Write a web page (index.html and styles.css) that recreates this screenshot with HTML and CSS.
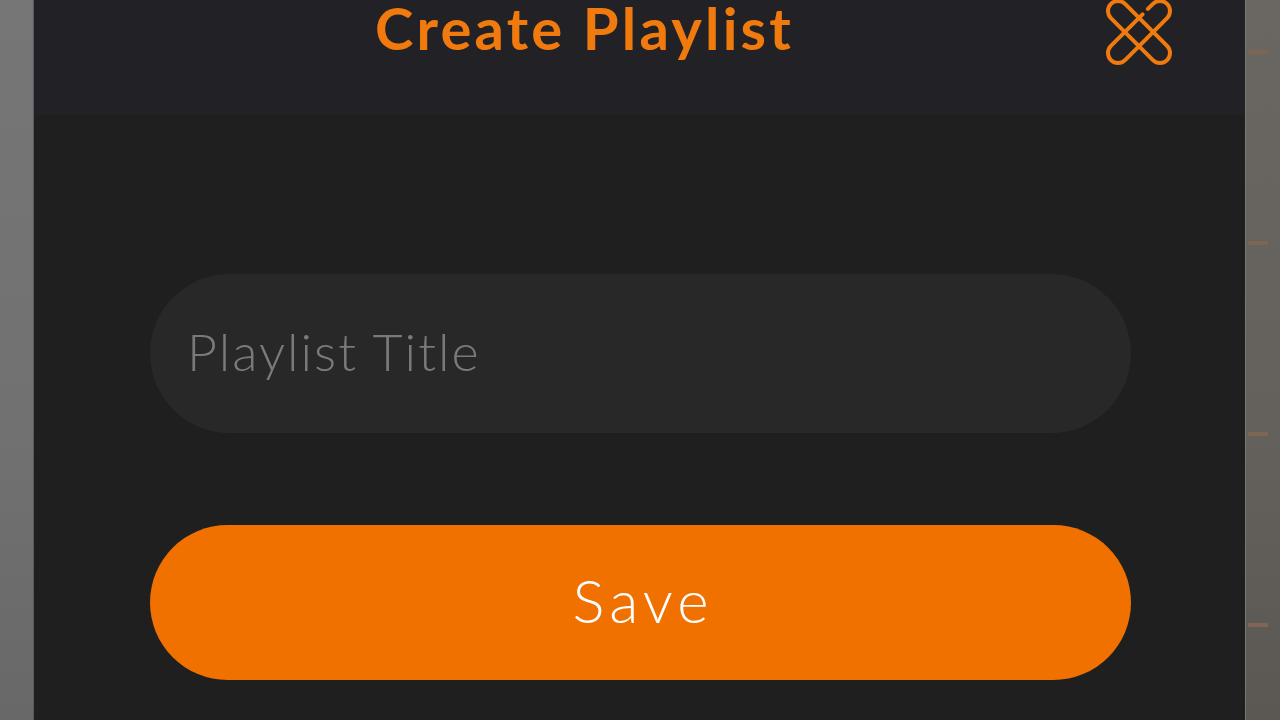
FILE: index.html
```html
<!DOCTYPE html>
<html lang="en">

<head>
  <meta charset="UTF-8" />
  <meta name="viewport" content="width=device-width, initial-scale=1.0" />
  <title>Create Playlist</title>
  <link rel="stylesheet" href="styles.css">
</head>

<body>
  <div class="screen">
    <div class="side side-left"></div>

    <div class="modal">
      <div class="modal-header">
        <h2 class="modal-title">Create Playlist</h2>
        <button class="close-btn" aria-label="Close">
          <svg viewBox="0 0 70 70" width="70" height="70" fill="none" stroke="#f07a0e" stroke-width="4" stroke-linecap="round">
            <!-- capsule from top-left to bottom-right -->
            <rect x="-4.7" y="25" width="79.4" height="20" rx="10" transform="rotate(45 35 35)" />
            <!-- capsule from bottom-left to top-right, left open near its top end -->
            <path d="M57.6 25 H64.7 A10 10 0 0 1 64.7 45 H5.3 A10 10 0 0 1 5.3 25 H50" transform="rotate(-45 35 35)" />
          </svg>
        </button>
      </div>

      <div class="modal-body">
        <input type="text" class="title-input" placeholder="Playlist Title" />
        <button class="save-btn">Save</button>
      </div>
    </div>

    <div class="side side-right">
      <span class="peek"></span>
      <span class="peek"></span>
      <span class="peek"></span>
      <span class="peek"></span>
    </div>
  </div>
</body>

</html>
```

FILE: styles.css
```css
body {
  margin: 0;
  font-family: Lato, "Noto Sans", sans-serif;
  background-color: #1f1f1f;
  overflow: hidden;
}

.screen {
  display: flex;
  height: 720px;
}

.side {
  width: 34px;
  flex-shrink: 0;
}

.side-left {
  background: linear-gradient(#767676, #717171 60%, #686868);
  border-right: 1px solid #5a5a5a;
  box-sizing: border-box;
}

.side-right {
  width: 35px;
  background: linear-gradient(#6a6763, #64615d 60%, #5b5854);
  border-left: 1px solid #7a7874;
  box-sizing: border-box;
  display: flex;
  flex-direction: column;
  gap: 187px;
  padding: 50px 0 0 2px;
}

.peek {
  display: block;
  width: 20px;
  height: 4px;
  background-color: #7f6553;
}

.modal {
  flex: 1;
  display: flex;
  flex-direction: column;
  background-color: #1f1f1f;
}

.modal-header {
  height: 115px;
  background-color: #222226;
  display: flex;
  align-items: flex-start;
  padding: 0 71px;
}

.modal-title {
  flex: 1;
  margin: 0;
  text-align: center;
  font-size: 58px;
  line-height: 56px;
  font-weight: 700;
  letter-spacing: 3.2px;
  color: #f07a0e;
}

.close-btn {
  margin: -3px 0 0 40px;
  padding: 0;
  width: 70px;
  height: 70px;
  border: none;
  background: none;
  cursor: pointer;
}

.close-btn svg {
  display: block;
}

.modal-body {
  display: flex;
  flex-direction: column;
  gap: 92px;
  padding: 159px 114px 0 116px;
}

.title-input {
  height: 159px;
  box-sizing: border-box;
  padding: 0 37px 6px;
  border: none;
  border-radius: 80px;
  background-color: #282828;
  font-family: inherit;
  font-size: 52px;
  font-weight: 300;
  letter-spacing: 2px;
  color: #d0d0d0;
  outline: none;
}

.title-input::placeholder {
  color: #7a7a7a;
}

.save-btn {
  height: 155px;
  border: none;
  border-radius: 78px;
  background-color: #f07000;
  color: #fff;
  font-family: inherit;
  font-size: 60px;
  font-weight: 300;
  letter-spacing: 5px;
  padding: 0 0 6px 5px;
  cursor: pointer;
}
```
